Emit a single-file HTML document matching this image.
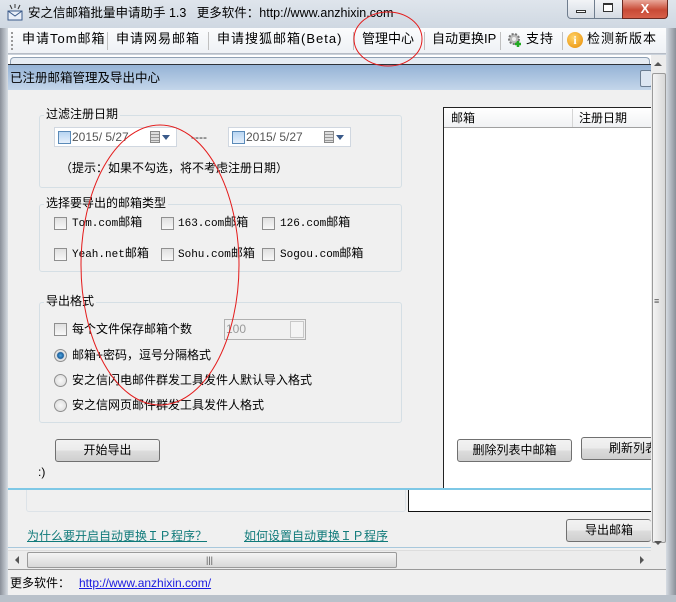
<!DOCTYPE html>
<html><head><meta charset="utf-8"><style>
*{margin:0;padding:0;box-sizing:border-box}
body{width:676px;height:602px;overflow:hidden;position:relative;background:#c9d1da;font:12px "Liberation Sans","Noto Sans CJK SC",sans-serif;color:#000}
.a{position:absolute}
.gb{position:absolute;border:1px solid #d5dfe5;border-radius:3px}
.gt{position:absolute;background:#f0f0f0;padding:0 2px;font-size:12px;line-height:14px}
.cb{position:absolute;width:13px;height:13px;border:1px solid #8f8f8f;background:linear-gradient(#e0e0e0,#f8f8f8)}
.rb{position:absolute;width:13px;height:13px;border:1px solid #8f8f8f;border-radius:50%;background:radial-gradient(#f8f8f8,#d8d8d8)}
.btn{position:absolute;border:1px solid #707070;border-radius:3px;background:linear-gradient(#f2f2f2 0,#ebebeb 50%,#dddddd 50%,#cfcfcf);text-align:center;line-height:20px;white-space:nowrap;overflow:hidden}
.t{position:absolute;white-space:nowrap;line-height:14px}
.sep{position:absolute;top:32px;width:1px;height:18px;background:#c0c0c0}
</style></head><body>
<div class="a" style="left:0;top:0;width:676px;height:28px;background:linear-gradient(#dfe5ec,#cfd8e2)"></div>
<svg class="a" style="left:6px;top:4px" width="18" height="18"><path d="M2 7h14v9H2z" fill="#e8eef8" stroke="#3a5a8a"/><path d="M2 7l7 5 7-5" fill="none" stroke="#3a5a8a"/><path d="M4 1l2 4M9 0v4M14 1l-2 4" stroke="#333"/></svg>
<div class="t" style="left:28px;top:6px;font-size:12.5px">安之信邮箱批量申请助手 1.3&nbsp;&nbsp;&nbsp;更多软件：http://www.anzhixin.com</div>
<div class="a" style="left:567px;top:0;width:56px;height:19px;border:1px solid #6f7d8e;border-top:0;border-radius:0 0 0 4px;background:linear-gradient(#f2f4f7,#d5dbe3)"></div>
<div class="a" style="left:594px;top:0;width:1px;height:19px;background:#6f7d8e"></div>
<div class="a" style="left:576px;top:10px;width:10px;height:3px;border:1px solid #333;background:#fff"></div>
<div class="a" style="left:603px;top:3px;width:10px;height:9px;border:1px solid #333;border-top-width:2px;background:#fff"></div>
<div class="a" style="left:622px;top:0;width:46px;height:19px;border:1px solid #6a2a22;border-top:0;border-radius:0 0 4px 0;background:linear-gradient(#e9a89a,#c84a36 55%,#d7604a);color:#fff;font-weight:bold;text-align:center;line-height:18px;font-size:13px">X</div>
<div class="a" style="left:0;top:28px;width:8px;height:574px;background:linear-gradient(90deg,#8a9099,#d6dce3)"></div>
<div class="a" style="left:666px;top:28px;width:10px;height:574px;background:linear-gradient(90deg,#d6dce3,#8a9099)"></div>
<div class="a" style="left:0;top:595px;width:676px;height:7px;background:#b9c1ca"></div>
<div class="a" style="left:8px;top:28px;width:658px;height:26px;background:linear-gradient(#fbfcfd,#eef1f5);border-bottom:1px solid #b6bcc6"></div>
<div class="a" style="left:11px;top:32px;width:2px;height:18px;border-left:2px dotted #999"></div>
<div class="t" style="left:22px;top:32px;font-size:13px;letter-spacing:1px">申请Tom邮箱</div>
<div class="sep" style="left:107px"></div>
<div class="t" style="left:116px;top:32px;font-size:13px;letter-spacing:1px">申请网易邮箱</div>
<div class="sep" style="left:208px"></div>
<div class="t" style="left:217px;top:32px;font-size:13px;letter-spacing:1px">申请搜狐邮箱(Beta)</div>
<div class="sep" style="left:353px"></div>
<div class="t" style="left:362px;top:32px;font-size:13px">管理中心</div>
<div class="sep" style="left:424px"></div>
<div class="t" style="left:432px;top:32px;font-size:13px">自动更换IP</div>
<div class="sep" style="left:500px"></div>
<svg class="a" style="left:507px;top:32px" width="16" height="16"><circle cx="7" cy="7" r="5" fill="#bbb" stroke="#777" stroke-width="2" stroke-dasharray="2 1.5"/><circle cx="7" cy="7" r="2" fill="#eee"/><path d="M11 9v6M8 12h6" stroke="#2a2" stroke-width="2.5"/></svg>
<div class="t" style="left:526px;top:32px;font-size:13px;letter-spacing:1px">支持</div>
<div class="sep" style="left:562px"></div>
<div class="a" style="left:567px;top:32px;width:16px;height:16px;border-radius:50%;background:radial-gradient(circle at 40% 35%,#ffd46a,#e88a00);color:#fff;font:bold 12px 'Liberation Serif';text-align:center;line-height:16px">i</div>
<div class="t" style="left:587px;top:32px;font-size:13px;letter-spacing:1px">检测新版本</div>
<div class="a" style="left:8px;top:55px;width:658px;height:515px;background:#fff"></div>
<div class="a" style="left:10px;top:57px;width:640px;height:8px;border:1px solid #8ea0b4;border-bottom:0;border-radius:4px 4px 0 0;background:#e6ecf3"></div>
<div class="a" style="left:8px;top:64px;width:643px;height:26px;border-top:1px solid #2e3238;background:linear-gradient(#95b3d6,#c4d6ea)"></div>
<div class="t" style="left:10px;top:71px;font-size:12.5px">已注册邮箱管理及导出中心</div>
<div class="a" style="left:640px;top:70px;width:12px;height:17px;border:1px solid #6b7d92;border-radius:2px;background:#dce6f2"></div>
<div class="a" style="left:8px;top:90px;width:643px;height:398px;background:#f0f0f0"></div>
<div class="gb" style="left:39px;top:115px;width:363px;height:73px"></div>
<div class="gt" style="left:44px;top:107px">过滤注册日期</div>
<div class="a" style="left:54px;top:127px;width:123px;height:20px;background:#fff;border:1px solid #d0d7e0"></div>
<div class="cb" style="left:58px;top:131px;border-color:#5a8ab8;background:linear-gradient(#b7d5f2,#e6f0fb)"></div>
<div class="t" style="left:72px;top:130px;color:#555">2015/ 5/27</div>
<div class="a" style="left:150px;top:131px;width:10px;height:12px;border:1px solid #888;background:repeating-linear-gradient(#ddd 0 2px,#999 2px 3px)"></div>
<div class="a" style="left:162px;top:135px;border:4px solid transparent;border-top:5px solid #3a5a8a"></div>
<div class="t" style="left:191px;top:130px;color:#333">----</div>
<div class="a" style="left:228px;top:127px;width:123px;height:20px;background:#fff;border:1px solid #d0d7e0"></div>
<div class="cb" style="left:232px;top:131px;border-color:#5a8ab8;background:linear-gradient(#b7d5f2,#e6f0fb)"></div>
<div class="t" style="left:246px;top:130px;color:#555">2015/ 5/27</div>
<div class="a" style="left:324px;top:131px;width:10px;height:12px;border:1px solid #888;background:repeating-linear-gradient(#ddd 0 2px,#999 2px 3px)"></div>
<div class="a" style="left:336px;top:135px;border:4px solid transparent;border-top:5px solid #3a5a8a"></div>
<div class="t" style="left:60px;top:161px">（提示：如果不勾选，将不考虑注册日期）</div>
<div class="gb" style="left:39px;top:204px;width:363px;height:68px"></div>
<div class="gt" style="left:44px;top:196px">选择要导出的邮箱类型</div>
<div class="cb" style="left:54px;top:217px"></div><div class="t" style="left:72px;top:216px;font-family:'Liberation Mono','Noto Sans CJK SC',monospace;font-size:11px">Tom.com<span style="font-size:12px">邮箱</span></div>
<div class="cb" style="left:161px;top:217px"></div><div class="t" style="left:178px;top:216px;font-family:'Liberation Mono','Noto Sans CJK SC',monospace;font-size:11px">163.com<span style="font-size:12px">邮箱</span></div>
<div class="cb" style="left:262px;top:217px"></div><div class="t" style="left:280px;top:216px;font-family:'Liberation Mono','Noto Sans CJK SC',monospace;font-size:11px">126.com<span style="font-size:12px">邮箱</span></div>
<div class="cb" style="left:54px;top:248px"></div><div class="t" style="left:72px;top:247px;font-family:'Liberation Mono','Noto Sans CJK SC',monospace;font-size:11px">Yeah.net<span style="font-size:12px">邮箱</span></div>
<div class="cb" style="left:161px;top:248px"></div><div class="t" style="left:178px;top:247px;font-family:'Liberation Mono','Noto Sans CJK SC',monospace;font-size:11px">Sohu.com<span style="font-size:12px">邮箱</span></div>
<div class="cb" style="left:262px;top:248px"></div><div class="t" style="left:280px;top:247px;font-family:'Liberation Mono','Noto Sans CJK SC',monospace;font-size:11px">Sogou.com<span style="font-size:12px">邮箱</span></div>
<div class="gb" style="left:39px;top:302px;width:363px;height:121px"></div>
<div class="gt" style="left:44px;top:294px">导出格式</div>
<div class="cb" style="left:54px;top:323px"></div><div class="t" style="left:72px;top:322px">每个文件保存邮箱个数</div>
<div class="a" style="left:224px;top:319px;width:82px;height:21px;border:1px solid #b0b0b0;background:#f0f0f0"></div>
<div class="t" style="left:226px;top:322px;color:#999">100</div>
<div class="a" style="left:290px;top:321px;width:14px;height:17px;border:1px solid #c8c8c8;background:#f4f4f4"></div>
<div class="rb" style="left:54px;top:349px;background:radial-gradient(circle,#4fa6e0 0,#1b5e9c 3px,#e8e8e8 4px,#cfcfcf)"></div><div class="t" style="left:72px;top:348px">邮箱+密码，逗号分隔格式</div>
<div class="rb" style="left:54px;top:374px"></div><div class="t" style="left:72px;top:373px">安之信闪电邮件群发工具发件人默认导入格式</div>
<div class="rb" style="left:54px;top:399px"></div><div class="t" style="left:72px;top:398px">安之信网页邮件群发工具发件人格式</div>
<div class="btn" style="left:55px;top:439px;width:105px;height:23px">开始导出</div>
<div class="t" style="left:38px;top:465px">:)</div>
<div class="a" style="left:443px;top:107px;width:208px;height:381px;border:1px solid #222;border-right:0;border-bottom:0;background:#fff"></div>
<div class="a" style="left:444px;top:108px;width:207px;height:20px;background:linear-gradient(#fff,#f1f2f4);border-bottom:1px solid #a0a0a0"></div>
<div class="a" style="left:572px;top:109px;width:1px;height:18px;background:#d5d5d5"></div>
<div class="t" style="left:451px;top:111px">邮箱</div>
<div class="t" style="left:579px;top:111px">注册日期</div>
<div class="btn" style="left:457px;top:439px;width:115px;height:23px">删除列表中邮箱</div>
<div class="btn" style="left:581px;top:437px;width:70px;height:23px;text-align:left;padding-left:27px;border-right:0;border-radius:3px 0 0 3px">刷新列表</div>
<div class="a" style="left:8px;top:488px;width:643px;height:2px;background:#7ec8e6"></div>
<div class="a" style="left:8px;top:490px;width:643px;height:60px;background:#f0f0f0"></div>
<div class="a" style="left:26px;top:490px;width:380px;height:22px;border:1px solid #dde3e8;border-top:0;border-radius:0 0 3px 3px"></div>
<div class="a" style="left:408px;top:490px;width:243px;height:22px;background:#fff;border:1px solid #111;border-top:0;border-right:0"></div>
<div class="t" style="left:27px;top:529px;color:#107a7a;text-decoration:underline">为什么要开启自动更换ＩＰ程序？</div>
<div class="t" style="left:244px;top:529px;color:#107a7a;text-decoration:underline">如何设置自动更换ＩＰ程序</div>
<div class="btn" style="left:566px;top:519px;width:85px;height:23px;border-right:0">导出邮箱</div>
<div class="a" style="left:8px;top:547px;width:643px;height:1px;background:#a8c8dc"></div>
<div class="a" style="left:8px;top:550px;width:643px;height:19px;background:#ececec;border-top:1px solid #ddd"></div>
<div class="a" style="left:15px;top:556px;border:4px solid transparent;border-right:4px solid #555;border-left:0"></div>
<div class="a" style="left:27px;top:552px;width:370px;height:16px;border:1px solid #9a9a9a;border-radius:2px;background:linear-gradient(#f4f4f4,#d8d8d8)"></div>
<div class="t" style="left:206px;top:553px;font-size:9px;color:#555">|||</div>
<div class="a" style="left:640px;top:556px;border:4px solid transparent;border-left:4px solid #555;border-right:0"></div>
<div class="a" style="left:651px;top:55px;width:15px;height:515px;background:#ececec"></div>
<div class="a" style="left:654px;top:62px;border:4px solid transparent;border-bottom:4px solid #555;border-top:0"></div>
<div class="a" style="left:652px;top:73px;width:14px;height:470px;border:1px solid #9a9a9a;border-radius:2px;background:linear-gradient(90deg,#f4f4f4,#d8d8d8)"></div>
<div class="t" style="left:654px;top:294px;font-size:9px;color:#555">≡</div>
<div class="a" style="left:654px;top:541px;border:4px solid transparent;border-top:4px solid #555;border-bottom:0"></div>
<div class="a" style="left:8px;top:569px;width:658px;height:26px;background:#f0f0f0;border-top:1px solid #999"></div>
<div class="t" style="left:10px;top:576px">更多软件：</div>
<div class="t" style="left:79px;top:576px;color:#1a1ae0;text-decoration:underline">http://www.anzhixin.com/</div>
<svg class="a" style="left:0;top:0" width="676" height="602"><ellipse cx="388" cy="39" rx="34" ry="27" fill="none" stroke="#e41b1b" stroke-width="1"/><ellipse cx="160" cy="265" rx="79" ry="140" fill="none" stroke="#e41b1b" stroke-width="1"/></svg>
</body></html>
